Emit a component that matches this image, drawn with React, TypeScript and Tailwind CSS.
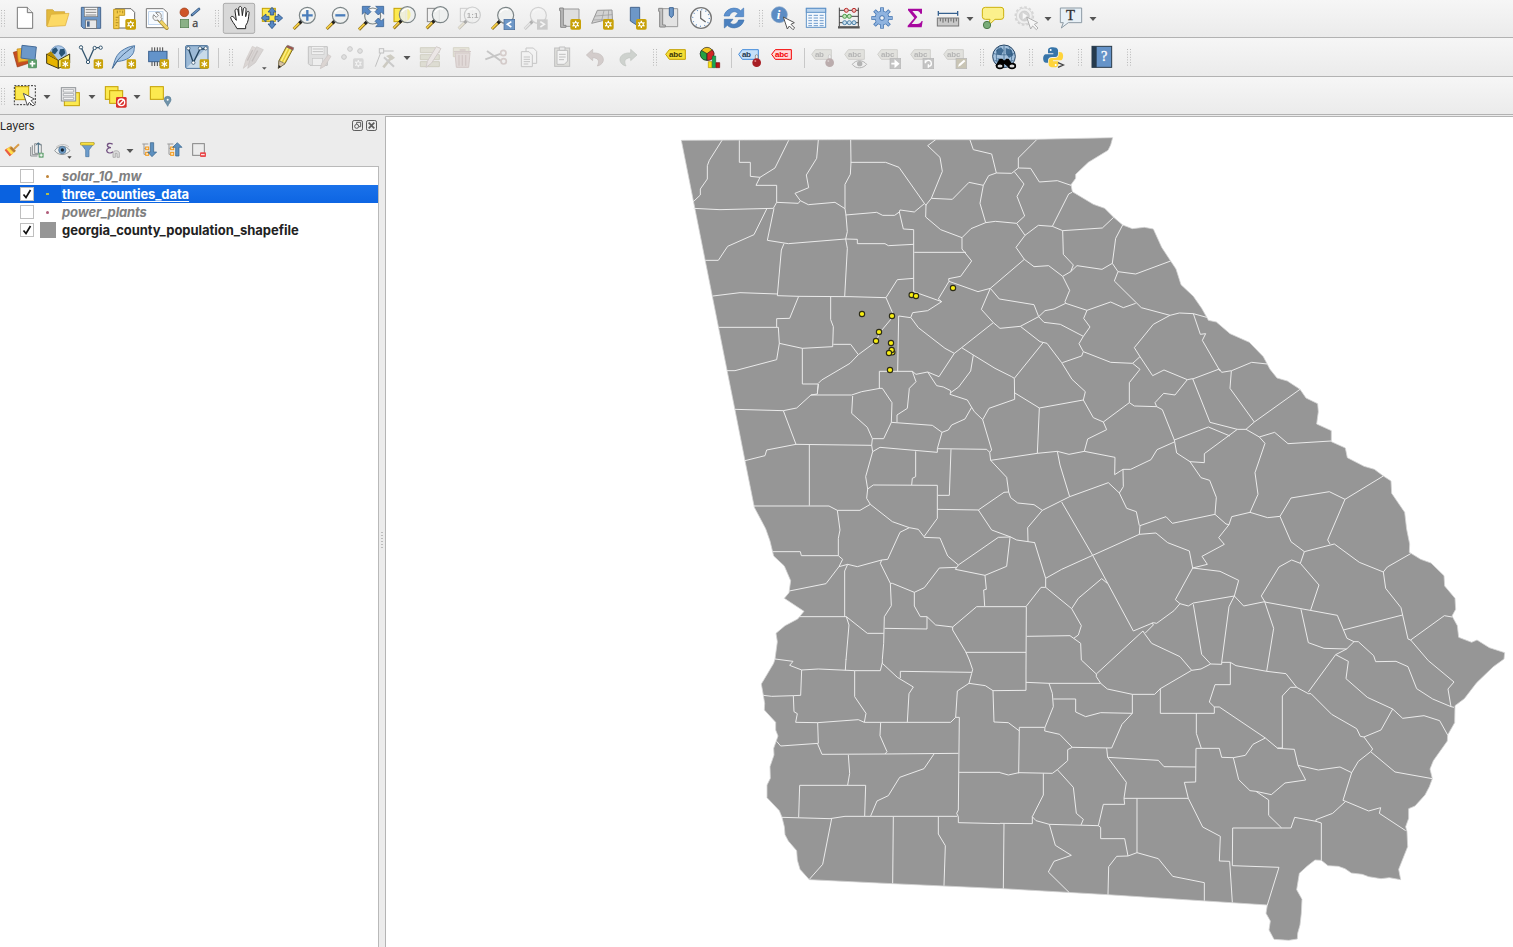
import React from 'react';

type Kids = { children?: React.ReactNode };

/* ---------- toolbar building blocks ---------- */

function Tool({ x, y, menu, children }: Kids & { x: number; y: number; menu?: boolean }) {
  return (
    <button className={menu ? 'flex w-[45px] shrink-0 items-start' : 'flex w-[33px] shrink-0 items-start'}>
      <svg className="h-6 w-6 overflow-visible" viewBox={`${x} ${y} 72 72`} fill="none">
        {children}
      </svg>
      {menu && <Caret />}
    </button>
  );
}

function Caret() {
  return (
    <svg className="ml-[6px] mt-[11px] h-1 w-2" viewBox="0 0 8 4">
      <path d="M.5 0h7L4 4z" fill="#555" />
    </svg>
  );
}

function Grip({ first }: { first?: boolean }) {
  const rows = [0, 1, 2, 3, 4, 5, 6];
  return (
    <div className={first ? 'flex w-[13px] shrink-0 pl-[1px] pt-[4px]' : 'flex w-4 shrink-0 pl-[4px] pt-[4px]'}>
      <svg className="h-[17px] w-[5px]" viewBox="0 0 5 17">
        {rows.map((r) => (
          <g key={r} fill="#b9b9b9">
            <rect x="0" y={r * 2.6} width="1" height="1" />
            <rect x="3" y={r * 2.6} width="1" height="1" />
          </g>
        ))}
      </svg>
    </div>
  );
}

function Divider() {
  return (
    <div className="w-[7px] shrink-0 pt-[3px]">
      <div className="h-5 w-px bg-[#c8c8c8]" />
    </div>
  );
}

function Badge({ x, y, hole }: { x: number; y: number; hole?: boolean }) {
  return (
    <g transform={hole ? `translate(${x} ${y})` : `translate(${x + 1} ${y + 2}) scale(.88)`}>
      <rect width="32" height="32" rx="5" fill="#c8a109" />
      <path d="M16 5v22M6.5 10.500l19 11M25.500 10.500l-19 11" stroke="#fff" strokeWidth="4" />
      {hole && <circle cx="16" cy="16" r="7" fill="#fff" />}
      {hole && <circle cx="16" cy="16" r="4" fill="#c8a109" />}
    </g>
  );
}

function Lens({ cx, cy, children }: Kids & { cx: number; cy: number }) {
  return (
    <g transform={`translate(${cx} ${cy})`}>
      <path d="M-18 18L-41 41" stroke="#8a6a1a" strokeWidth="9" />
      <path d="M-22 21L-41 40" stroke="#f5cf45" strokeWidth="5" />
      <path d="M-16 16l-8 8" stroke="#222" strokeWidth="9" />
      <circle r="24" fill="#edefee" fillOpacity=".88" stroke="#7b8486" strokeWidth="3.500" />
      <path d="M-16 -8A18 18 0 0 1 8 -16" stroke="#fff" strokeWidth="4" />
      {children}
    </g>
  );
}

function Tag({ x, y, fill, line, ink, label }: { x: number; y: number; fill: string; line: string; ink: string; label: string }) {
  return (
    <g transform={`translate(${x} ${y})`}>
      <path d="M2 15L13 1H61V30H13Z" fill={fill} stroke={line} strokeWidth="3" />
      <text x="12" y="23" fontFamily="Liberation Sans, sans-serif" fontWeight="700" fontSize="24" textLength={label.length === 3 ? 40 : 27} fill={ink}>
        {label}
      </text>
    </g>
  );
}

function Pin({ x, y }: { x: number; y: number }) {
  return (
    <g>
      <rect x={x - 4} y={y - 24} width="8" height="24" rx="4" fill="#eee" stroke="#777" strokeWidth="2" />
      <circle cx={x} cy={y} r="13" fill="#a81e24" />
      <circle cx={x - 4} cy={y - 5} r="3" fill="#e08080" />
    </g>
  );
}

function Pointer({ x, y }: { x: number; y: number }) {
  return (
    <path
      transform={`translate(${x} ${y})`}
      d="M0 0L33 17L23 22L34 33L29 38L18 27L12 36Z"
      fill="#fff"
      stroke="#555"
      strokeWidth="3"
    />
  );
}

const Faded = ({ children }: Kids) => <g className="opacity-35 grayscale-[.7]">{children}</g>;

/* ---------- toolbars ---------- */

function MainToolbar() {
  return (
    <div className="flex h-[38px] items-start border-b border-[#b2b2b2] bg-gradient-to-b from-[#f6f6f6] to-[#ebebeb] pt-[6px]">
      <Grip first />
      <Tool x={39} y={18}>
        <path d="M52 22H82L98 38V85H52Z" fill="#fff" stroke="#777" strokeWidth="3" />
        <path d="M82 22V38H98" fill="#e8e8e8" stroke="#777" strokeWidth="3" />
      </Tool>
      <Tool x={138} y={18}>
        <path d="M140 78V29H158L164 35H194V45" fill="#e2b93c" stroke="#c99c2c" strokeWidth="2" />
        <path d="M141 80L153 43L207 40L196 77Z" fill="#fcd965" stroke="#d9a93a" strokeWidth="2" />
      </Tool>
      <Tool x={237} y={18}>
        <path d="M244 22H302V85H250L244 79Z" fill="#6d97c7" stroke="#47678f" strokeWidth="3" />
        <rect x="253" y="22" width="40" height="28" fill="#f4f4f4" stroke="#777" strokeWidth="2" />
        <path d="M257 29H289M257 37H289M257 45H289" stroke="#888" strokeWidth="3" />
        <rect x="257" y="60" width="33" height="25" fill="#e8e8e8" stroke="#666" strokeWidth="2" />
        <rect x="261" y="64" width="8" height="16" fill="#46658c" />
      </Tool>
      <Tool x={336} y={18}>
        <path d="M346 26H393L404 37V84H346Z" fill="#fff" stroke="#666" strokeWidth="3" />
        <path d="M341 28H374V46H357V86H341Z" fill="#f3cb4b" stroke="#c39b20" strokeWidth="3" />
        <path d="M347 52h8M347 60h5M347 68h8M347 76h5M352 32v8M360 32v5M368 32v8" stroke="#8d6d10" strokeWidth="2" />
        <Badge x={376} y={57} hole />
      </Tool>
      <Tool x={435} y={18}>
        <path d="M439 26H490L502 38V83H439Z" fill="#fff" stroke="#777" strokeWidth="3" />
        <rect x="446" y="35" width="43" height="39" fill="#f7fbff" stroke="#a9c5e8" strokeWidth="2" />
        <path d="M475 57L500 84" stroke="#a78a2c" strokeWidth="12" strokeLinecap="round" />
        <path d="M481 63L500 83" stroke="#f0d369" strokeWidth="8" strokeLinecap="round" />
        <path d="M461 44L469 52L475 46L467 38C478 33 487 43 483 53L487 57L479 65L473 60C463 65 455 55 461 44Z" fill="#f3f3f3" stroke="#777" strokeWidth="2.500" />
      </Tool>
      <Tool x={534} y={18}>
        <circle cx="553" cy="37" r="13" fill="#cf5527" stroke="#9b3c16" strokeWidth="2" />
        <path d="M597 27L576 45" stroke="#36567c" strokeWidth="8" strokeLinecap="round" />
        <path d="M597 27L578 43" stroke="#6d97c7" strokeWidth="4" strokeLinecap="round" />
        <rect x="541" y="58" width="25" height="25" fill="#8bb187" stroke="#4e7b4b" strokeWidth="2" />
        <text x="577" y="81" fontFamily="Open Sans, sans-serif" fontSize="32" fill="#444" stroke="#444">a</text>
      </Tool>
      <Grip />
      <Tool x={681} y={18}>
        <rect x="670" y="10" width="94" height="90" rx="5" fill="#d8d8d8" stroke="#acacac" strokeWidth="3" />
        <path
          d="M711 86C705 73 693 61 692 53C693 47 700 48 704 55L709 61L705 33C705 25 713 25 714 32L717 47L716 25C717 17 725 18 725 25L727 47L730 27C732 20 739 22 738 29L737 50L740 38C743 31 749 34 747 41C745 54 746 65 737 77V86Z"
          fill="#fff"
          stroke="#222"
          strokeWidth="3"
        />
      </Tool>
      <Tool x={780} y={18}>
        <rect x="787" y="25" width="39" height="39" fill="#fce94f" stroke="#c4a000" strokeWidth="3" />
        {[0, 90, 180, 270].map((a) => (
          <path key={a} transform={`rotate(${a} 816 54)`} d="M816 22L828 36H821V45H811V36H804Z" fill="#5788c4" stroke="#2e5688" strokeWidth="2.500" />
        ))}
      </Tool>
      <Tool x={879} y={18}>
        <Lens cx={922} cy={46}><path d="M-16 0H16M0 -16V16" stroke="#4a7dbb" strokeWidth="7" /></Lens>
      </Tool>
      <Tool x={978} y={18}>
        <Lens cx={1021} cy={46}><path d="M-15 0H15" stroke="#4a7dbb" strokeWidth="7" /></Lens>
      </Tool>
      <Tool x={1077} y={18}>
        <g transform="translate(1077 18)">
          <Lens cx={41} cy={30} />
          <g fill="#5788c4" stroke="#2e5688" strokeWidth="2">
            <path d="M10 1H34L27 8L36 17L26 27L17 18L10 25Z" />
            <path d="M74 1H50L57 8L48 17L58 27L67 18L74 25Z" />
            <path d="M74 62H50L57 55L48 46L58 36L67 45L74 38Z" />
          </g>
        </g>
      </Tool>
      <Tool x={36} y={18}>
        <rect x="42" y="25" width="36" height="40" fill="#fce94f" stroke="#c4a000" strokeWidth="3" />
        <Lens cx={82} cy={44} />
        <path d="M82 26C94 31 96 53 82 62Z" fill="#f5ed98" />
      </Tool>
      <Tool x={135} y={18}>
        <rect x="142" y="25" width="36" height="40" fill="#f1f1f1" stroke="#888" strokeWidth="3" />
        <Lens cx={181} cy={44} />
      </Tool>
      <Tool x={234} y={18}>
        <Faded>
          <rect x="241" y="25" width="36" height="40" stroke="#888" strokeWidth="3" />
          <Lens cx={277} cy={45}>
            <text x="-17" y="8" fontFamily="Liberation Sans, sans-serif" fontWeight="700" fontSize="24" textLength="35" fill="#333">1:1</text>
          </Lens>
        </Faded>
      </Tool>
      <Tool x={333} y={18}>
        <Lens cx={377} cy={46} />
        <rect x="372" y="58" width="32" height="31" fill="#6d97c7" stroke="#44699a" strokeWidth="2" />
        <path d="M394 65L382 73L394 81" stroke="#fff" strokeWidth="5" />
      </Tool>
      <Tool x={432} y={18}>
        <g className="opacity-30 grayscale">
          <Lens cx={475} cy={46} />
          <rect x="471" y="58" width="32" height="31" fill="#6d7c97" />
          <path d="M481 65L493 73L481 81" stroke="#fff" strokeWidth="5" />
        </g>
      </Tool>
      <Tool x={531} y={18}>
        <path d="M544 27H597V79H547Z" fill="#dedede" stroke="#999" strokeWidth="3" />
        <path d="M539 24H550V76H558V82H542V32H539Z" fill="#bbb" stroke="#888" strokeWidth="3" />
        <Badge x={571} y={57} hole />
      </Tool>
      <Tool x={630} y={18}>
        <path d="M652 31L696 30L698 70L668 62L635 70Z" fill="#d2d2d2" stroke="#999" strokeWidth="3" />
        <path d="M645 48L697 44M672 31L665 62M640 60L698 58M686 31L684 66" stroke="#999" strokeWidth="2" />
        <Badge x={669} y={57} hole />
      </Tool>
      <Tool x={729} y={18}>
        <path d="M751 22H779V79L765 72L751 63Z" fill="#6d97c7" stroke="#47678f" strokeWidth="3" />
        <Badge x={768} y={57} hole />
      </Tool>
      <Tool x={828} y={18}>
        <path d="M842 26H893V80H842Z" fill="#e3e3e3" stroke="#999" strokeWidth="3" />
        <path d="M836 25H848V75H856V81H839V34H836Z" fill="#c2c2c2" stroke="#888" strokeWidth="3" />
        <path d="M868 23H880V46L874 53L868 46Z" fill="#6d97c7" stroke="#3f6595" strokeWidth="3" />
      </Tool>
      <Tool x={927} y={18}>
        <circle cx="963" cy="54" r="31" fill="#f7f9fb" stroke="#777" strokeWidth="4" />
        <circle cx="963" cy="54" r="25" stroke="#6d97c7" strokeWidth="4" strokeDasharray="3 10.090" />
        <path d="M962 32V55L977 66" stroke="#666" strokeWidth="3.500" />
      </Tool>
      <Tool x={1026} y={18}>
        <path d="M1032 48C1037 25 1066 17 1082 32L1091 24V50H1065L1074 40C1064 31 1053 35 1048 48Z" fill="#5d91cf" stroke="#4379b8" strokeWidth="2" />
        <path d="M1092 60C1087 83 1058 91 1042 76L1033 84V58H1059L1050 68C1060 77 1071 73 1076 60Z" fill="#4a80bf" stroke="#3d70aa" strokeWidth="2" />
      </Tool>
      <Grip />
      <Tool x={63} y={18}>
        <circle cx="88" cy="44" r="24" fill="#5c8cc4" stroke="#88a5c6" strokeWidth="2" />
        <text x="80" y="56" fontFamily="Liberation Serif, serif" fontStyle="italic" fontWeight="bold" fontSize="39" fill="#fff">i</text>
        <Pointer x={100} y={51} />
      </Tool>
      <Tool x={162} y={18}>
        <rect x="169" y="25" width="58" height="57" fill="#f3f8fd" stroke="#5f92c7" strokeWidth="3" />
        <rect x="169" y="25" width="58" height="12" fill="#b9d3ed" stroke="#5f92c7" strokeWidth="3" />
        <path d="M175 46H186M191 46H204M209 46H221M175 54H186M191 54H204M209 54H221M175 62H186M191 62H204M209 62H221M175 70H186M191 70H204M209 70H221M175 77H186M191 77H204M209 77H221" stroke="#6e9bcc" strokeWidth="3" />
      </Tool>
      <Tool x={261} y={18}>
        <path d="M268 23V80M325 23V80M268 31H325M268 49H325M268 68H325" stroke="#444" strokeWidth="3" />
        <path d="M264 82H329" stroke="#555" strokeWidth="7" />
        <g fill="#f3c0bd" stroke="#b62d2d" strokeWidth="3"><circle cx="289" cy="31" r="6" /><circle cx="312" cy="31" r="6" /></g>
        <g fill="#c3e5bd" stroke="#499b48" strokeWidth="3"><circle cx="284" cy="49" r="6" /><circle cx="298" cy="49" r="6" /></g>
        <g fill="#cae0ef" stroke="#4e83ab" strokeWidth="3"><circle cx="284" cy="68" r="6" /><circle cx="298" cy="68" r="6" /><circle cx="312" cy="68" r="6" /></g>
      </Tool>
      <Tool x={360} y={18}>
        {[0, 45, 90, 135].map((a) => (
          <path key={a} transform={`rotate(${a} 396 54)`} d="M396 22V86" stroke="#4375b2" strokeWidth="11" />
        ))}
        <circle cx="396" cy="54" r="22" fill="#4375b2" />
        {[0, 45, 90, 135].map((a) => (
          <path key={a} transform={`rotate(${a} 396 54)`} d="M396 24V84" stroke="#8fb3df" strokeWidth="6" />
        ))}
        <circle cx="396" cy="54" r="20" fill="#8fb3df" />
        <circle cx="396" cy="54" r="7" fill="#f4f4f4" stroke="#4375b2" strokeWidth="3" />
      </Tool>
      <Tool x={459} y={18}>
        <path d="M474 26H516V41H511C509 34 505 33 498 33H487L502 51L485 72H501C509 72 512 69 515 63H518L515 82H473V77L493 54L474 31Z" fill="#a7089f" />
      </Tool>
      <Tool x={558} y={18} menu>
        <path d="M565 33V47M623 33V47M565 40H623" stroke="#36618f" strokeWidth="4" />
        <rect x="562" y="54" width="64" height="24" fill="#c9c9c9" stroke="#777" strokeWidth="3" />
        <path d="M571 55v9M579 55v13M587 55v9M595 55v13M603 55v9M611 55v13M619 55v9" stroke="#555" strokeWidth="2.500" />
      </Tool>
      <Tool x={693} y={18}>
        <path d="M706 22H753Q761 22 761 30V50Q761 58 753 58H735L716 76L720 58H706Q697 58 697 50V30Q697 22 706 22Z" fill="#fbf08c" stroke="#cdb10d" strokeWidth="3" />
        <circle cx="711" cy="75" r="11" fill="#79ac78" stroke="#4e7b4b" strokeWidth="3" />
      </Tool>
      <Tool x={792} y={18} menu>
        <g className="opacity-40">
          <circle cx="823" cy="48" r="24" fill="#eee" stroke="#aaa" strokeWidth="3" />
          <circle cx="823" cy="48" r="27" stroke="#aaa" strokeWidth="5" strokeDasharray="8 6" />
          <circle cx="823" cy="48" r="15" fill="#aaa" stroke="#888" strokeWidth="2" />
          <path d="M818 38V58L833 48Z" fill="#fff" />
          <Pointer x={830} y={51} />
        </g>
      </Tool>
      <Tool x={927} y={18} menu>
        <path d="M931 24H995V68H955L934 84L940 68H931Z" fill="#e8f0f6" stroke="#8c9aa4" strokeWidth="3" />
        <text x="948" y="59" fontFamily="Liberation Serif, serif" fontSize="44" textLength="29" fill="#333" stroke="#333">T</text>
      </Tool>
    </div>
  );
}

function EditToolbar() {
  return (
    <div className="flex h-[39px] items-start border-b border-[#b2b2b2] bg-gradient-to-b from-[#f6f6f6] to-[#ebebeb] pt-[7px]">
      <Grip first />
      <Tool x={39} y={135}>
        <path d="M40 157L73 148L85 190L52 201Z" fill="#c74d20" stroke="#963812" strokeWidth="2" />
        <path d="M51 147L86 143L91 181L55 187Z" fill="#f1b731" stroke="#bd8717" strokeWidth="2" />
        <path d="M66 136L109 141L105 180L63 174Z" fill="#6c98c8" stroke="#456b98" strokeWidth="3" />
        <rect x="84" y="178" width="27" height="27" rx="4" fill="#5d9c6b" />
        <path d="M97 183V200M89 191H106" stroke="#fff" strokeWidth="5" />
      </Tool>
      <Tool x={138} y={135}>
        <circle cx="175" cy="161" r="24" fill="#a9c7e8" stroke="#557ba7" strokeWidth="2" />
        <path d="M157 148L168 142L174 151L165 163L156 159ZM180 148L193 146L196 160L184 171L177 160Z" fill="#285477" />
        <path d="M140 162L175 181V205L140 190Z" fill="#e6b400" stroke="#3e3512" strokeWidth="3" />
        <path d="M175 181L209 162V189L175 205Z" fill="#fff278" stroke="#3e3512" strokeWidth="3" />
        <path d="M140 162L153 154L175 181" fill="#b68b00" />
        <Badge x={181} y={176} />
      </Tool>
      <Tool x={237} y={135}>
        <path d="M244 143L264 186L283 143H302" stroke="#35566f" strokeWidth="4" />
        <g fill="#fff" stroke="#35566f" strokeWidth="3"><circle cx="243" cy="142" r="5" /><circle cx="264" cy="186" r="5" /><circle cx="284" cy="144" r="5" /><circle cx="302" cy="143" r="5" /></g>
        <Badge x={280} y={176} />
      </Tool>
      <Tool x={336} y={135}>
        <path d="M337 205C345 184 345 162 374 147C389 138 398 139 404 137C401 148 406 157 390 171C377 182 361 183 351 185Z" fill="#a6c5e5" stroke="#507aa8" strokeWidth="3" />
        <path d="M337 205C353 176 371 161 400 140" stroke="#45678c" strokeWidth="3" />
        <Badge x={379} y={176} />
      </Tool>
      <Tool x={435} y={135}>
        <path d="M456 142V198M464 142V198M472 142V198M480 142V198M488 142V198" stroke="#444" strokeWidth="3" />
        <rect x="446" y="154" width="55" height="31" fill="#6393ca" stroke="#3b618f" strokeWidth="3" />
        <Badge x={478} y={176} />
      </Tool>
      <Divider />
      <Tool x={555} y={135}>
        <rect x="557" y="137" width="67" height="68" rx="3" fill="#9bb9d6" stroke="#456e98" strokeWidth="3" />
        <path d="M560 203L622 140V203Z" fill="#c9dbe9" />
        <path d="M566 147L580 188L600 147H618" stroke="#23435d" strokeWidth="4" />
        <g fill="#fff" stroke="#23435d" strokeWidth="2"><circle cx="565" cy="145" r="5" /><circle cx="580" cy="188" r="5" /><circle cx="600" cy="145" r="5" /><circle cx="617" cy="145" r="5" /></g>
        <Badge x={598} y={176} />
      </Tool>
      <Divider />
      <Grip />
      <Tool x={723} y={135}>
        <g className="opacity-35">
          <path d="M730 205L738 178L757 139L772 146L751 188Z" fill="#b8a9a4" stroke="#91827c" strokeWidth="2" />
          <path d="M743 205L750 179L770 140L790 149L766 188Z" fill="#aba19e" stroke="#81736f" strokeWidth="2" />
          <path d="M758 150L742 182M773 152L756 184" stroke="#776864" strokeWidth="4" />
        </g>
        <path d="M786 202H800L793 209Z" fill="#555" />
      </Tool>
      <Tool x={822} y={135}>
        <path d="M835 205L837 182L859 140L878 148L855 191Z" fill="#e6cd37" stroke="#836f20" strokeWidth="3" />
        <path d="M863 144L843 184M872 147L850 189" stroke="#fff086" strokeWidth="4" />
        <path d="M858 140L863 136L881 143L879 151Z" fill="#a45249" stroke="#777" strokeWidth="2" />
        <path d="M837 182L855 191L835 205Z" fill="#d9c3a0" stroke="#666" strokeWidth="2" />
        <path d="M835 205L836 195L843 200Z" fill="#222" />
      </Tool>
      <Tool x={921} y={135}>
        <g className="opacity-30">
          <path d="M925 140H982V196H930L925 191Z" fill="#bbb" stroke="#555" strokeWidth="3" />
          <rect x="935" y="140" width="37" height="23" fill="#eee" stroke="#666" strokeWidth="2" />
          <rect x="937" y="175" width="31" height="21" fill="#eee" stroke="#666" strokeWidth="2" />
          <path d="M938 147H969M938 155H969" stroke="#555" strokeWidth="3" />
          <path d="M961 206L965 190L985 164L993 169L975 198Z" fill="#b09a92" stroke="#76645f" strokeWidth="2" />
        </g>
      </Tool>
      <Tool x={1020} y={135}>
        <g className="opacity-30 grayscale">
          <g fill="#bbb" stroke="#666" strokeWidth="3"><circle cx="1050" cy="147" r="7" /><circle cx="1032" cy="171" r="7" /><circle cx="1080" cy="153" r="7" /></g>
          <Badge x={1059} y={175} hole />
        </g>
      </Tool>
      <Tool x={-21} y={135} menu>
        <g className="opacity-30">
          <path d="M-14 200L4 153H41" stroke="#555" strokeWidth="3" />
          <rect x="-2" y="146" width="13" height="13" fill="#eee" stroke="#555" strokeWidth="3" />
          <path d="M10 202L33 174" stroke="#827b5d" strokeWidth="8" />
          <path d="M12 172L42 200" stroke="#777" strokeWidth="6" />
          <path d="M18 168L32 163L45 173L35 181Z" fill="#827b5d" />
        </g>
      </Tool>
      <Tool x={114} y={135}>
        <g className="opacity-30">
          <path d="M121 143H178V158H121ZM121 164H178V179H121ZM121 185H178V200H121Z" fill="#b8b694" stroke="#87835b" strokeWidth="3" />
          <path d="M138 202L142 184L169 140L183 146L154 190Z" fill="#dfd0cc" stroke="#8b7772" strokeWidth="3" />
        </g>
      </Tool>
      <Tool x={213} y={135}>
        <g className="opacity-30">
          <path d="M220 143H267V170H220Z" fill="#cac5a1" stroke="#979169" strokeWidth="3" />
          <path d="M225 159H270L266 202H229Z" fill="#c3aaa5" stroke="#92716c" strokeWidth="3" />
          <path d="M221 155H273M239 150H257M237 165V197M247 165V197M257 165V197" stroke="#92716c" strokeWidth="4" />
        </g>
      </Tool>
      <Tool x={312} y={135}>
        <g className="opacity-35">
          <path d="M316 178L363 161M321 153L363 183" stroke="#777" strokeWidth="6" />
          <circle cx="370" cy="159" r="8" stroke="#a48b87" strokeWidth="5" />
          <circle cx="371" cy="184" r="8" stroke="#a48b87" strokeWidth="5" />
        </g>
      </Tool>
      <Tool x={411} y={135}>
        <g className="opacity-35" stroke="#777" strokeWidth="3" fill="#f6f6f6">
          <path d="M438 144H460L470 154V190H438Z" />
          <path d="M424 155H447L457 165V200H424Z" />
          <path d="M431 171H450M431 178H450M431 185H450M431 192H445" />
        </g>
      </Tool>
      <Tool x={510} y={135}>
        <g className="opacity-40" stroke="#777" strokeWidth="3">
          <rect x="524" y="144" width="45" height="55" fill="#c6c6bd" />
          <path d="M531 151H563V183L553 193H531Z" fill="#f7f7f7" />
          <path d="M538 141H555V151H538ZM537 163H557M537 171H557M537 179H552" fill="#ddd" />
        </g>
      </Tool>
      <Tool x={609} y={135}>
        <path d="M619 165L638 148V159C663 157 674 172 669 185C666 192 660 196 652 198C658 186 658 174 638 173V182Z" fill="#d3cccb" stroke="#c4bebc" strokeWidth="2" />
      </Tool>
      <Tool x={708} y={135}>
        <path d="M771 165L752 148V159C727 157 716 172 721 185C724 192 730 196 738 198C732 186 732 174 752 173V182Z" fill="#ced2ce" stroke="#bfc4bf" strokeWidth="2" />
      </Tool>
      <Grip />
      <Tool x={855} y={135}>
        <Tag x={855} y={148} fill="#f4de36" line="#c4a000" ink="#3b3508" label="abc" />
      </Tool>
      <Tool x={954} y={135}>
        <circle cx="981" cy="161" r="19" fill="#f2c31b" stroke="#222" strokeWidth="2" />
        <path d="M981 161L964 151A19 19 0 0 0 981 181Z" fill="#25a043" stroke="#222" strokeWidth="2" />
        <path d="M981 161L997 149A19 19 0 0 1 981 181Z" fill="#d32526" stroke="#222" strokeWidth="2" />
        <path d="M985 185H996V203H985Z" fill="#fce50c" stroke="#b08f00" strokeWidth="2" />
        <path d="M997 168H1007V203H997Z" fill="#17aa51" stroke="#186b38" strokeWidth="2" />
        <path d="M1008 188H1019V203H1008Z" fill="#bd1616" stroke="#701010" strokeWidth="2" />
      </Tool>
      <Divider />
      <Tool x={1074} y={135}>
        <Tag x={1074} y={148} fill="#c5dff8" line="#438bdb" ink="#24384f" label="ab" />
        <Pin x={1130} y={188} />
      </Tool>
      <Tool x={63} y={135}>
        <Tag x={63} y={148} fill="#ffd9d9" line="#f50000" ink="#f50000" label="abc" />
      </Tool>
      <Divider />
      <Tool x={183} y={135}>
        <Faded>
          <Tag x={183} y={148} fill="#c9c7a1" line="#949275" ink="#444" label="ab" />
          <Pin x={239} y={188} />
        </Faded>
      </Tool>
      <Tool x={282} y={135}>
        <Faded><Tag x={282} y={148} fill="#c9c7a1" line="#949275" ink="#444" label="abc" /></Faded>
        <path d="M307 193C317 179 338 178 350 193C338 207 317 207 307 193Z" fill="#eee" stroke="#b3b3b3" strokeWidth="3" />
        <circle cx="329" cy="191" r="8" fill="#b3b3b3" />
      </Tool>
      <Tool x={381} y={135}>
        <Faded><Tag x={381} y={148} fill="#c9c7a1" line="#949275" ink="#444" label="abc" /></Faded>
        <rect x="420" y="175" width="32" height="31" fill="#c4c4c4" stroke="#b8b8b8" strokeWidth="2" />
        <path d="M424 191H441M436 183L445 191L436 199Z" stroke="#fff" strokeWidth="5" fill="#fff" />
      </Tool>
      <Tool x={480} y={135}>
        <Faded><Tag x={480} y={148} fill="#c9c7a1" line="#949275" ink="#444" label="abc" /></Faded>
        <rect x="519" y="175" width="32" height="31" fill="#c4c4c4" stroke="#b8b8b8" strokeWidth="2" />
        <path d="M526 190A9 9 0 1 1 537 199M526 190V181M535 193V203" stroke="#fff" strokeWidth="4" />
      </Tool>
      <Tool x={579} y={135}>
        <Faded><Tag x={579} y={148} fill="#c9c7a1" line="#949275" ink="#444" label="abc" /></Faded>
        <rect x="618" y="175" width="32" height="31" fill="#c9c5b5" stroke="#b8b8b8" strokeWidth="2" />
        <path d="M624 200L627 192L642 179L646 184L631 197Z" fill="#fff" />
      </Tool>
      <Grip />
      <Tool x={726} y={135}>
        <circle cx="762" cy="169" r="34" fill="#a6c3df" stroke="#284665" strokeWidth="3" />
        <path d="M738 151L753 142L761 151L754 166L742 163ZM767 144L785 150L790 166L777 174L767 160ZM742 174L757 179L749 193Z" fill="#426d94" />
        <path d="M729 160C748 166 776 166 795 160M733 181C750 187 775 187 791 181M762 136V204M748 139C735 160 737 183 748 199M776 139C789 160 787 183 776 199" stroke="#325a80" strokeWidth="2" />
        <path d="M736 198L749 176H757L761 181H765L768 176H776L790 198L777 203L763 192L749 203Z" fill="#000" />
        <ellipse cx="750" cy="198" rx="10" ry="7" fill="#ddd" stroke="#000" strokeWidth="5" />
        <ellipse cx="786" cy="198" rx="10" ry="7" fill="#ddd" stroke="#000" strokeWidth="5" />
      </Tool>
      <Grip />
      <Tool x={873} y={135}>
        <path d="M909 142C895 142 894 147 894 153V160H910V163H887C880 164 879 174 880 180C881 187 885 189 890 188H894V180C895 174 899 171 906 171H916C922 170 924 166 924 161V150C923 144 916 142 909 142Z" fill="#3775a9" />
        <path d="M910 202C924 202 925 197 925 191V184H909V181H932C939 180 940 170 939 164C938 158 934 156 929 156H926V165C925 171 921 174 914 174H905C898 175 896 178 896 183V194C897 200 903 202 910 202Z" fill="#ffd43b" />
        <circle cx="902" cy="150" r="3" fill="#fff" />
        <circle cx="917" cy="195" r="3" fill="#fff" />
        <path d="M924 188L940 195L924 202" stroke="#444" strokeWidth="4" />
      </Tool>
      <Grip />
      <Tool x={1020} y={135}>
        <rect x="1026" y="139" width="59" height="63" fill="#6593c8" stroke="#2b3b4a" strokeWidth="3" />
        <rect x="1026" y="139" width="14" height="63" fill="#253a4d" />
        <text x="1053" y="184" fontFamily="Liberation Serif, serif" fontSize="43" fill="#fff" stroke="#fff">?</text>
      </Tool>
      <Grip />
    </div>
  );
}

function SelectionToolbar() {
  return (
    <div className="flex h-[38px] items-start border-b border-[#b2b2b2] bg-gradient-to-b from-[#f6f6f6] to-[#ebebeb] pt-[7px]">
      <Grip first />
      <Tool x={39} y={252} menu>
        <rect x="46" y="260" width="40" height="39" fill="#fce94f" stroke="#c4a000" strokeWidth="3" />
        <rect x="43" y="257" width="63" height="57" stroke="#333" strokeWidth="3" strokeDasharray="6 4" />
        <Pointer x={70} y={280} />
      </Tool>
      <Tool x={174} y={252} menu>
        <rect x="193" y="278" width="45" height="39" fill="#fce94f" stroke="#c4a000" strokeWidth="3" />
        <rect x="184" y="263" width="43" height="40" fill="#e9e9e9" stroke="#909498" strokeWidth="3" />
        <path d="M190 269H221V276H190ZM190 281H221V287H190ZM190 292H221V298H190Z" fill="#fff" stroke="#909498" strokeWidth="2" />
      </Tool>
      <Tool x={309} y={252} menu>
        <rect x="316" y="260" width="38" height="38" fill="#fce94f" stroke="#c4a000" strokeWidth="3" />
        <rect x="329" y="272" width="39" height="38" fill="#fce94f" stroke="#c4a000" strokeWidth="3" />
        <rect x="348" y="291" width="32" height="32" rx="4" fill="#d9302d" />
        <circle cx="364" cy="307" r="10" fill="#d9302d" stroke="#fff" strokeWidth="4" />
        <path d="M357 314L371 300" stroke="#fff" strokeWidth="4" />
      </Tool>
      <Tool x={444} y={252}>
        <rect x="451" y="260" width="39" height="38" fill="#fce94f" stroke="#c4a000" strokeWidth="3" />
        <path d="M503 319C500 310 492 305 493 299A10 10 0 0 1 513 299C513 306 506 310 503 319Z" fill="#7093aa" stroke="#567b94" strokeWidth="2" />
        <circle cx="503" cy="299" r="3" fill="#fff" />
      </Tool>
    </div>
  );
}

/* ---------- layers panel ---------- */

function SmallTool({ x, children }: Kids & { x: number }) {
  return (
    <button className="flex w-[25px] shrink-0 items-start">
      <svg className="block h-4 w-4 overflow-visible" viewBox={`${x} 96 48 48`} fill="none">
        {children}
      </svg>
    </button>
  );
}

function Tree({ x }: { x: number }) {
  return (
    <g transform={`translate(${x} 96)`}>
      <path d="M0 6H18M5 6V37H14M5 19H14" stroke="#999" strokeWidth="3" />
      <rect x="10" y="15" width="9" height="8" fill="#fce5be" stroke="#f39a1c" strokeWidth="3" />
      <rect x="10" y="31" width="9" height="9" fill="#fce5be" stroke="#f39a1c" strokeWidth="3" />
    </g>
  );
}

function PanelTools() {
  return (
    <div className="flex h-[24px] shrink-0 items-start pl-1">
      <SmallTool x={12}>
        <path d="M14 120L32 108L47 123L29 139Z" fill="#f2b64b" />
        <path d="M14 120L23 114L38 131L29 139Z" fill="#e95b48" />
        <path d="M19 117L25 113L40 129L34 134Z" fill="#ffe04c" />
        <path d="M32 112L45 125" stroke="#b77d31" strokeWidth="7" />
        <path d="M42 117L57 103" stroke="#d99c48" strokeWidth="6" />
      </SmallTool>
      <SmallTool x={87}>
        <path d="M92 111V138H112M97 106V134H116M104 101V130H124V103Z" stroke="#8a8f91" strokeWidth="3" />
        <path d="M115 129V99M108 106L115 98L122 106" stroke="#456c83" strokeWidth="3" />
        <rect x="116" y="128" width="15" height="15" rx="2" fill="#6da779" />
        <path d="M123.500 131V140M119 135.500H128" stroke="#fff" strokeWidth="3" />
      </SmallTool>
      <SmallTool x={162}>
        <path d="M164 122C174 105 198 104 210 122C197 138 175 137 164 122Z" fill="#eef1f2" stroke="#94999b" strokeWidth="3" />
        <circle cx="187" cy="120" r="11" fill="#6f9dc8" stroke="#4c6d8b" strokeWidth="2" />
        <circle cx="187" cy="120" r="5" fill="#152330" />
        <path d="M168 112C180 101 197 101 207 111" stroke="#aaa" strokeWidth="2" />
        <path d="M202 139H215L208.500 146Z" fill="#444" />
      </SmallTool>
      <SmallTool x={237}>
        <path d="M241 99H283L267 120V140H257V120Z" fill="#6d9ccc" stroke="#47749f" strokeWidth="2" />
        <path d="M242 98H282V105H242Z" fill="#fce94f" stroke="#c4a000" strokeWidth="2" />
      </SmallTool>
      <SmallTool x={312}>
        <path d="M338 103C330 97 321 101 322 107C323 112 328 113 333 113C323 113 317 120 322 126C326 130 334 129 339 125" stroke="#715080" strokeWidth="4" />
        <path d="M339 142V129C339 120 358 120 358 129V142H351V130H346V142Z" fill="#ddd" stroke="#999" strokeWidth="2" />
      </SmallTool>
      <div className="w-3 shrink-0">
        <svg className="-ml-[3px] mt-[7px] block h-1 w-2" viewBox="0 0 8 4">
          <path d="M.5 0h7L4 4z" fill="#555" />
        </svg>
      </div>
      <SmallTool x={423}>
        <Tree x={427} />
        <path d="M451 98H461V126H470L456 140L443 126H451Z" fill="#5d90bf" stroke="#315f88" strokeWidth="2" />
      </SmallTool>
      <SmallTool x={498}>
        <Tree x={502} />
        <path d="M527 138H537V112H546L532 98L518 112H527Z" fill="#5d90bf" stroke="#315f88" strokeWidth="2" />
      </SmallTool>
      <SmallTool x={573}>
        <rect x="578" y="101" width="35" height="35" stroke="#858585" strokeWidth="3" />
        <rect x="600" y="127" width="18" height="14" rx="3" fill="#e94b4e" />
        <path d="M603 134H614" stroke="#fff" strokeWidth="3" />
      </SmallTool>
    </div>
  );
}

function Check({ on }: { on?: boolean }) {
  return (
    <span className="ml-5 flex h-[14px] w-[14px] shrink-0 items-center justify-center border border-[#bfbfbf] bg-white">
      {on && (
        <svg className="h-[10px] w-[10px]" viewBox="0 0 10 10" fill="none">
          <path d="M1.500 5.500L4 8.500L8.500 1" stroke="#111" strokeWidth="1.700" />
        </svg>
      )}
    </span>
  );
}

function Panel() {
  return (
    <div className="flex w-[379px] shrink-0 flex-col">
      <div className="flex h-[27px] shrink-0 items-start justify-between pr-[2px] pt-[4px]">
        <span className="text-[11px] leading-[14px] text-[#222]">Layers</span>
        <div className="flex gap-[3px] pt-[1px]">
          <svg className="h-[11px] w-[11px]" viewBox="0 0 33 33" fill="none" stroke="#5d5d5d">
            <rect x="1.500" y="1.500" width="30" height="30" rx="5" strokeWidth="3" />
            <circle cx="14" cy="19" r="6" strokeWidth="3" />
            <path d="M14 12V7H26V20H21" strokeWidth="3" />
          </svg>
          <svg className="h-[11px] w-[11px]" viewBox="0 0 33 33" fill="none" stroke="#5d5d5d">
            <rect x="1.500" y="1.500" width="30" height="30" rx="5" strokeWidth="3" />
            <path d="M8 8L25 25M25 8L8 25" strokeWidth="5" />
          </svg>
        </div>
      </div>
      <PanelTools />
      <div className="flex flex-1 flex-col border-r border-t border-[#b9b9b9] bg-white text-[13px] font-bold">
        <div className="flex h-[18px] items-center italic text-[#808080]">
          <Check />
          <i className="mx-3 h-[3px] w-[3px] rounded-full bg-[#c08438]" />
          <span className="ml-px pt-[2px] tracking-[-0.08px]">solar_10_mw</span>
        </div>
        <div className="flex h-[18px] items-center bg-[#0a62e0] text-white">
          <Check on />
          <i className="mx-3 h-[2px] w-[3px] bg-[#b5bd4b]" />
          <span className="flex h-full flex-1 items-center bg-gradient-to-b from-[#1a72ea] to-[#0d65e3] pl-px pt-[2px] tracking-[-0.1px] underline decoration-1 underline-offset-2">three_counties_data</span>
        </div>
        <div className="flex h-[18px] items-center italic text-[#808080]">
          <Check />
          <i className="mx-3 h-[3px] w-[3px] rounded-full bg-[#b05b79]" />
          <span className="ml-px pt-[2px] tracking-[-0.14px]">power_plants</span>
        </div>
        <div className="flex h-[18px] items-center text-[#222]">
          <Check on />
          <i className="mx-[6px] h-4 w-4 bg-[#969696]" />
          <span className="pt-[2px] tracking-[-0.03px]">georgia_county_population_shapefile</span>
        </div>
      </div>
    </div>
  );
}

/* ---------- map ---------- */

type Sheet = { x: number; y: number; lines: string };

/* State boundary, listed sheet by sheet, three units to a pixel. */
const OUTLINE: [number, number, string][] = [
  [670, 125, '34,46 220,45 542,44 900,44'],
  [900, 125, '410,43 638,38 632,60 624,76 565,112 527,148 527,160 513,179 517,200 580,238 614,250 641,277 668,300 697,311 733,307 760,312 785,367 812,408 828,432 843,479 880,514 905,550 922,580'],
  [1200, 300, '25,61 49,66 90,101 148,127 190,170 202,193 210,208 231,234 262,243 300,268 318,294 353,311 355,335 350,372 394,392 394,425 436,444 442,473 492,499 523,508 550,528 573,543 575,580 614,637 620,688 629,732 628,757 662,778 693,789 732,827 734,858 765,895 767,928 756,948 772,977 776,1012 815,1027 831,1020 868,1043 914,1058'],
  [1200, 600, '912,177 880,200 830,248 793,296 765,317 764,368 743,405 742,423 700,482 690,507 697,536 688,560 675,585 645,618 626,626 626,655 617,680 621,695 623,740 596,808 602,839 568,833 543,836 506,830 487,823 454,819 435,806 415,799 384,797 364,781 345,780 322,798 298,820 290,869 306,898 304,940 300,975 293,1000 292,1017 266,1021 222,1018 207,990 211,963 198,940 202,915'],
  [1000, 600, '324,884 10,866'],
  [750, 600, '428,851 178,839 150,808 142,780 140,752 115,723 105,704 103,680 96,652 88,632 51,593 51,555 61,535 60,500 72,465 71,445 84,408 77,390 77,367 43,330 44,310 40,286 34,252 71,190 75,177 82,125 78,100 105,77 143,57 162,34'],
  [720, 370, '193,685 207,668 212,632 193,588 161,558 150,513 137,476 103,412 75,272 45,120 22,5'],
];

const BORDERS: Sheet[] = [
  {
    x: 670,
    y: 125,
    lines:
      'M156 46L118 106L112 122V162L91 192V210L70 230M208 46V112H241V154L270 157L315 129L356 46M270 157L258 181H320V232L385 235L391 227M445 45L440 100L409 150L416 188L375 205L391 227L415 239L495 232L525 251M542 44L543 112L541 148L525 178V251L528 270L532 320L527 342L532 370L524 515M542 112H647L687 127L763 235L768 241M70 250L150 254L310 250L320 232M312 250L292 346L355 356L527 342M290 252L252 329L173 364L145 406H106M342 356L334 375L322 512M129 513L210 503L322 507M322 512L386 514L540 515L648 518M386 514L359 580L320 581V606M146 607H325L328 655L320 704L195 737H171M328 655L397 670L488 665L490 605L482 584V516M397 670V777H445L442 800M490 658H542L565 689M445 775L455 765L540 715L565 689L618 650L630 622L665 580L668 564L648 518L682 464L731 460M527 270L620 262L638 271H674L688 261L690 255L733 261L763 236M688 261L700 312L731 314V500L815 530L773 557L728 563L722 578L686 573L683 739M527 342L562 343V356H645L655 362L731 358M628 790V739H727',
  },
  {
    x: 900,
    y: 125,
    lines:
      'M107 44L83 62L120 97L127 139L94 220L78 240L77 276L122 314L186 338V372L215 408L182 454L146 461L147 469L115 522L125 530M94 220L157 223L207 172L250 181L266 152L289 144L335 145L355 129L392 130L418 171L472 167L513 181M210 45L220 74L275 87L289 144M410 44L355 99V129M343 140L372 177L351 214L374 273L350 295L286 289L257 293L213 311L186 338M250 181L240 235L257 293M350 295L375 331L415 301L457 304L488 317L607 309L641 277M516 202L506 207L457 304M375 331L348 367L373 403L402 425L446 422L488 454L512 440L531 422L606 433L637 415L654 440L707 447L812 408M488 317L490 388L520 420L512 440M668 300L647 340L637 415M373 403L271 490L234 500L147 469M43 382H198M271 490L298 522L402 539L416 575L435 557L462 552L497 535L561 556L632 531L670 548L707 535M488 454L509 496L495 530L497 535M271 490L244 553L280 593L300 610L361 604L416 575L432 592L481 598L550 634M561 556L551 580L570 606L550 634L537 656L550 680L545 693L487 713M361 604L420 650L441 655L485 713L516 763L556 800M431 651L343 760M550 680L632 712L698 715L720 695L703 668L760 598L810 571L838 564L880 566L920 577M654 440L643 468L724 548L810 571M880 566L901 628L917 626L907 646L960 738M698 715L720 733L688 773M720 695L758 752L792 735L862 764M878 762L958 732M280 593L185 668L163 685L135 670L55 608L33 578M163 685L117 755L83 741L48 748L37 739M185 668L220 690L285 730L335 755L343 760M220 690L212 738L176 786L152 803M83 741L110 782L130 786L152 797V803M37 739L48 770L28 790L22 850L-9 870V891',
  },
  {
    x: 720,
    y: 370,
    lines:
      'M295 42L292 72L273 75L230 114L190 122L45 118M273 75H395L425 65L480 55H487L516 98L514 157L491 206H457L442 172L395 130L398 78M190 122L228 223L455 226L457 207M75 272L135 257L140 240L228 223M268 224V407M455 226L458 245L437 320L443 357L440 385L451 403L420 421H352L327 408H101M458 245L480 232L652 247V236L800 238L809 247L812 271M514 157L637 166L666 187L652 236M666 187L685 180L695 165L735 147L755 112L742 90L690 73L692 66M755 112L763 125L788 149L807 115L884 88L883 25M883 68L958 114M788 149L815 240L809 247M587 244V320L577 325L575 345M443 357L460 345L652 346V376H688L693 238M652 376V445L612 500L595 478L568 473L517 455L451 403M652 418L775 420L852 367L866 366M812 271L860 322L866 366L872 383L893 399L942 404L967 421M775 420L815 480L872 501L835 502L715 585L706 598L795 616L860 589L870 503M872 501L890 510L945 518M612 502L660 504L683 558L715 585M710 592L658 594L613 653L583 667L517 640H511L481 580L485 570L503 568L540 487L568 473M485 570L412 590L383 583L357 590L368 568L355 557H244L241 545H158M355 557V505L360 480L352 421M357 590L318 641L208 663M383 583L374 603V740M238 740H379L387 765L378 870M379 740L442 790H491M511 640L514 707L493 740L491 820L487 868M583 667V708L601 740H621L647 765L698 771L770 710H918M621 741V777L494 775M795 616L799 658L791 660L794 708M698 771V780L737 845L748 870M737 847H918',
  },
  {
    x: 1000,
    y: 370,
    lines:
      'M118 114L112 250M118 114L250 90L256 65M-28 271L112 250L172 244L207 253L253 244L345 262L344 314L369 298H392L453 269L471 239L523 216M250 90L280 143L310 156L320 179L263 207L253 244M310 156L388 98V38M388 98L403 108L470 110L487 119L523 210L530 249L570 275L613 278V251L712 178M470 110L465 98L491 70L525 75L562 29L578 26M578 26L630 157L712 178H738L763 156L690 55L694 3M523 210L625 171L690 198M763 156L900 58M738 178L778 201L795 220L765 308L774 373L750 427L695 440L687 464L678 462L645 433M570 275L603 323L629 331L649 382L645 433L517 460L498 440L420 467L418 493M172 244L180 285L209 380M369 298L370 350L358 369L380 415L409 425L418 467M358 369L325 338L209 380L127 421L83 473L84 514M185 396L278 556L400 783L460 758L470 760L522 722L540 701M418 493L278 556L185 598L137 625L104 518M418 493L468 489L503 518L568 543L578 594L526 689L540 701L565 708L580 699L703 678M578 594L622 583L606 559L673 523L656 503L687 464M578 594L660 604L716 631L703 678L731 708L794 695M137 625V652H123L78 710M137 652L215 716L235 685L305 626L322 640M215 716L244 767L235 795L221 805L210 797L80 799M221 805L242 820L244 870M79 710L78 900M750 427L803 443L840 439',
  },
  {
    x: 1200,
    y: 300,
    lines:
      'M58 207L65 217L95 212L155 187L202 192M178 411L224 397L264 431L394 423M240 649L273 594L388 575L435 598L383 720L390 732M403 732L313 755L273 725L240 649M435 598L550 528M313 755L301 790L275 780L237 801L184 888L195 906M301 790L357 855L332 930M194 906L412 946L441 1015L462 1025M403 732L478 787L550 816L562 801L632 761M550 816L557 865L603 923L624 1017L632 1020M608 945L430 990M632 1020L733 947L756 951',
  },
  {
    x: 1000,
    y: 600,
    lines:
      'M429 93L289 222L244 180M289 222V230L302 250L322 267L397 283H464L481 266L575 211M575 211L540 170L455 130L433 100L429 93M435 100L460 75L457 68M575 211L603 207L632 192L605 163L580 13M632 192L665 193V187H691V254H645L628 306L643 321H658L796 414L832 444H848M665 187L687 20L703 -12M691 187L708 197L800 214L821 85L794 5M78 210V271M78 247L147 250H302M147 250L157 280L160 320L135 382L134 393L179 403L217 442L203 449V482L172 509L157 520M160 297H227V336L257 350L302 338L397 340V283M397 340L366 373L335 444L217 442M320 444L323 472L475 481L492 500L587 501M323 472L379 547L372 595H565M372 595L374 613H310L295 677L302 682V716H374L384 768M481 265V340H643V321M589 340V400L604 445M587 546L588 445H658L665 472L700 473L736 466L759 433L796 414M587 546L553 547L565 595L608 681L661 709L658 783L689 784L697 907M134 382H58L56 520M0 518L25 525L57 518L157 520M172 509L220 562L229 640L250 658L243 675M130 520V585L97 650L108 662L148 673L295 677M97 650V671L0 670M148 673L166 736L214 766L162 784L145 816L208 878M12 671L10 866M411 595V758L384 768L350 769L326 800L324 884M411 758L475 776L518 829L613 848V902',
  },
  {
    x: 1200,
    y: 600,
    lines:
      'M100 473L116 539L150 572L168 574L214 584L255 549L317 540L294 496L283 448L232 445M168 574L206 600V646L245 684M245 684H98L97 797L237 802L202 915M245 684H273L284 652L348 664L364 669V781M348 664V659L398 640L437 604L429 601L455 518L475 484L512 455L518 447L492 411L543 390L578 327M437 604L506 633L542 623L538 640L617 692M512 455L585 516L697 536M294 496L355 510L420 501L455 518M247 445V288L271 262H290M200 214L258 221L290 262L325 281H333L395 343L470 386L481 409L492 411M325 276L407 164L440 147L372 145L325 128L303 28M440 147L462 125H475L521 167L527 185L588 184L624 200L650 266L698 297L753 320L762 322M407 164L445 184L438 236L502 292L578 327L608 355L672 347L719 362L743 405M632 120L685 182L762 246L744 267L753 320',
  },
  {
    x: 750,
    y: 600,
    lines:
      'M288 178L286 211M397 178V190M391 212L397 188M391 212H314L205 207L155 210L119 196L129 184L75 177M155 210L152 286L130 287L65 289L40 286M130 287L132 335L142 341L137 367L203 368L325 359L343 367H602L617 352H628L625 630L620 640L625 650V668L750 671M314 212V290L348 340L343 367M397 190L442 232L490 261L477 281L472 366M451 234V214L665 217M658 180L668 209L665 220L657 250L622 273L617 352M657 250L706 257L729 272L732 366L775 368L807 392M729 272L828 271M203 368L205 430L92 438L80 424M203 432L216 463L405 462L625 460M392 368L390 407L411 455L405 462M295 465L299 520L293 555M146 652L149 556H347L344 648M552 462L522 506L449 532L415 587L381 603L362 648M96 652L240 656L285 649H622M245 656L218 793L178 838M430 650L428 850M565 650V702L586 737L582 857M627 517H750',
  },
];

const PLANTS = [
  [576, 567], [666, 573], [627, 621], [618, 648], [663, 654], [667, 682], [665, 675],
  [657, 684], [660, 735], [725, 510], [738, 513], [849, 489],
];

const boundary = OUTLINE.flatMap(([ox, oy, pts]) =>
  pts.split(' ').map((p) => {
    const [px, py] = p.split(',').map(Number);
    return `${(ox + px / 3).toFixed(2)},${(oy + py / 3).toFixed(2)}`;
  }),
).join(' ');

function MapCanvas() {
  return (
    <div className="mt-px min-w-0 flex-1 border-l border-t border-[#b4b4b4] bg-white">
      <svg className="block h-[830px] w-[1127px]" viewBox="386 117 1127 830" fill="none">
        <polygon points={boundary} fill="#969696" stroke="#d4d4d4" strokeWidth=".8" />
        {BORDERS.map((s) => (
          <path key={`${s.x}-${s.y}`} transform={`translate(${s.x} ${s.y}) scale(.33333)`} d={s.lines} stroke="#ebebeb" strokeWidth="3" strokeLinejoin="round" />
        ))}
        {PLANTS.map(([px, py]) => (
          <circle key={`${px}-${py}`} cx={670 + px / 3} cy={125 + py / 3} r="2.650" fill="#f8ee12" stroke="#2c2b17" strokeWidth="1.100" />
        ))}
      </svg>
    </div>
  );
}

export default function App() {
  return (
    <div className="flex h-[947px] w-[1513px] flex-col overflow-hidden bg-[#ececec] font-['Inter',sans-serif]">
      <MainToolbar />
      <EditToolbar />
      <SelectionToolbar />
      <div className="flex min-h-0 flex-1">
        <Panel />
        <div className="flex w-[6px] shrink-0 items-center justify-center pt-[17px]">
          <div className="flex flex-col gap-[2px]">
            {[0, 1, 2, 3, 4, 5].map((d) => (
              <i key={d} className="h-px w-[2px] bg-[#bcbcbc]" />
            ))}
          </div>
        </div>
        <MapCanvas />
      </div>
    </div>
  );
}
